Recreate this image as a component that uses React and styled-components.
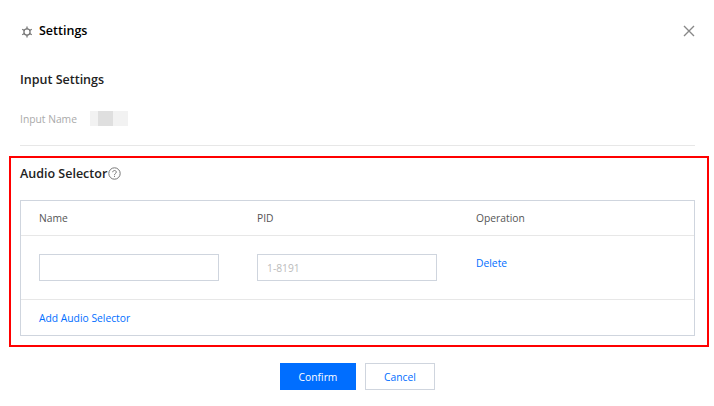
import React from "react";
import styled, { createGlobalStyle } from "styled-components";

const GlobalStyle = createGlobalStyle`
  html, body {
    margin: 0;
    padding: 0;
    background: #fff;
  }
  body {
    font-family: "Open Sans", "Noto Sans", "Liberation Sans", sans-serif;
    font-size: 10.3px;
    color: #444;
  }
  * {
    box-sizing: border-box;
  }
`;

const Page = styled.div`
  width: 714px;
  height: 406px;
  padding: 0 19px 0 20px;
  overflow: hidden;
`;

const Header = styled.div`
  height: 62px;
  display: flex;
  align-items: center;
  justify-content: space-between;
`;

const HeaderTitle = styled.div`
  display: flex;
  align-items: center;
  gap: 6px;
  margin-top: -2px;
  font-size: 12.5px;
  font-weight: 600;
  color: #000;
`;

const CloseButton = styled.button`
  display: flex;
  padding: 0;
  border: 0;
  background: none;
  color: #888;
`;

const SectionTitle = styled.h3`
  margin: 9px 0 0;
  font-size: 12.5px;
  line-height: 17px;
  font-weight: 600;
  color: #222;
`;

const InputRow = styled.div`
  display: flex;
  align-items: center;
  height: 15px;
  margin-top: 23px;
`;

const RowLabel = styled.span`
  width: 70px;
  color: #aaa;
`;

const Masked = styled.div`
  width: 38px;
  height: 15px;
  background: linear-gradient(
    to right,
    #f2f2f2 0 8px,
    #dfdfdf 8px 23px,
    #f2f2f2 23px
  );
`;

const Divider = styled.hr`
  margin: 19px 0 10px;
  border: 0;
  border-top: 1px solid #e7e7e7;
`;

const RedBox = styled.section`
  height: 191px;
  margin: 0 -14px 0 -11px;
  padding: 7px 12px 0 9px;
  border: 2px solid #f00;
`;

const SelectorTitle = styled(SectionTitle)`
  display: flex;
  align-items: center;
  height: 17px;
  margin: 0;
`;

const HelpIcon = styled.svg`
  margin-left: 1px;
  color: #777;
`;

const Table = styled.div`
  margin-top: 18px;
  border: 1px solid #cfd5de;
`;

const Row = styled.div`
  display: grid;
  grid-template-columns: 218px 219px 1fr;
  padding: 0 18px;
  height: ${(p) => p.$height}px;
  align-items: center;
  border-bottom: 1px solid #e7e7e7;
`;

const HeadCell = styled.span`
  color: #555;
`;

const TextInput = styled.input`
  width: 180px;
  height: 27px;
  padding: 0 9px;
  border: 1px solid #cfd5de;
  border-radius: 0;
  outline: none;
  font: inherit;
  color: #444;
  &::placeholder {
    color: #bbb;
    opacity: 1;
  }
`;

const LinkText = styled.a`
  color: #006eff;
  cursor: pointer;
`;

const DeleteCell = styled(LinkText)`
  margin-top: -9px;
`;

const TableFooter = styled.div`
  display: flex;
  align-items: center;
  height: 35px;
  padding: 0 18px;
`;

const Actions = styled.div`
  display: flex;
  justify-content: center;
  gap: 9px;
  margin-top: 16px;
`;

const Button = styled.button`
  width: ${(p) => p.$width}px;
  height: 27px;
  padding: 0;
  border: 1px solid ${(p) => (p.$primary ? "#006eff" : "#cfd5de")};
  background: ${(p) => (p.$primary ? "#006eff" : "#fff")};
  color: ${(p) => (p.$primary ? "#fff" : "#006eff")};
  font: inherit;
`;

const Gear = styled.svg`
  margin: 4px 0 0 1px;
`;

const GearIcon = () => (
  <Gear width="12" height="12" viewBox="0 0 14 14" fill="none" stroke="#777" strokeWidth="1.5">
    <circle cx="7" cy="7" r="3.6" />
    <path d="M7 .5v3M7 10.5v3M1.4 3.8l2.6 1.5M10 8.7l2.6 1.5M1.4 10.2L4 8.7M10 5.3l2.6-1.5" />
  </Gear>
);

const CloseIcon = () => (
  <svg width="12" height="12" viewBox="0 0 12 12" fill="none" stroke="currentColor" strokeWidth="1.4">
    <path d="M1 1l10 10M11 1L1 11" />
  </svg>
);

const QuestionIcon = () => (
  <HelpIcon width="13" height="13" viewBox="0 0 13 13" fill="none" stroke="currentColor">
    <circle cx="6.5" cy="6.5" r="5.7" />
    <path d="M4.7 5.2c0-1 .8-1.7 1.8-1.7s1.8.7 1.8 1.6c0 1.4-1.8 1.4-1.8 2.8" />
    <path d="M6.5 8.8v1.1" />
  </HelpIcon>
);

export default function App() {
  return (
    <Page>
      <GlobalStyle />
      <Header>
        <HeaderTitle>
          <GearIcon />
          Settings
        </HeaderTitle>
        <CloseButton aria-label="Close">
          <CloseIcon />
        </CloseButton>
      </Header>

      <SectionTitle>Input Settings</SectionTitle>
      <InputRow>
        <RowLabel>Input Name</RowLabel>
        <Masked />
      </InputRow>
      <Divider />

      <RedBox>
        <SelectorTitle>
          Audio Selector
          <QuestionIcon />
        </SelectorTitle>
        <Table>
          <Row $height={35}>
            <HeadCell>Name</HeadCell>
            <HeadCell>PID</HeadCell>
            <HeadCell>Operation</HeadCell>
          </Row>
          <Row $height={64}>
            <TextInput />
            <TextInput placeholder="1-8191" />
            <DeleteCell>Delete</DeleteCell>
          </Row>
          <TableFooter>
            <LinkText>Add Audio Selector</LinkText>
          </TableFooter>
        </Table>
      </RedBox>

      <Actions>
        <Button $primary $width={76}>Confirm</Button>
        <Button $width={70}>Cancel</Button>
      </Actions>
    </Page>
  );
}
